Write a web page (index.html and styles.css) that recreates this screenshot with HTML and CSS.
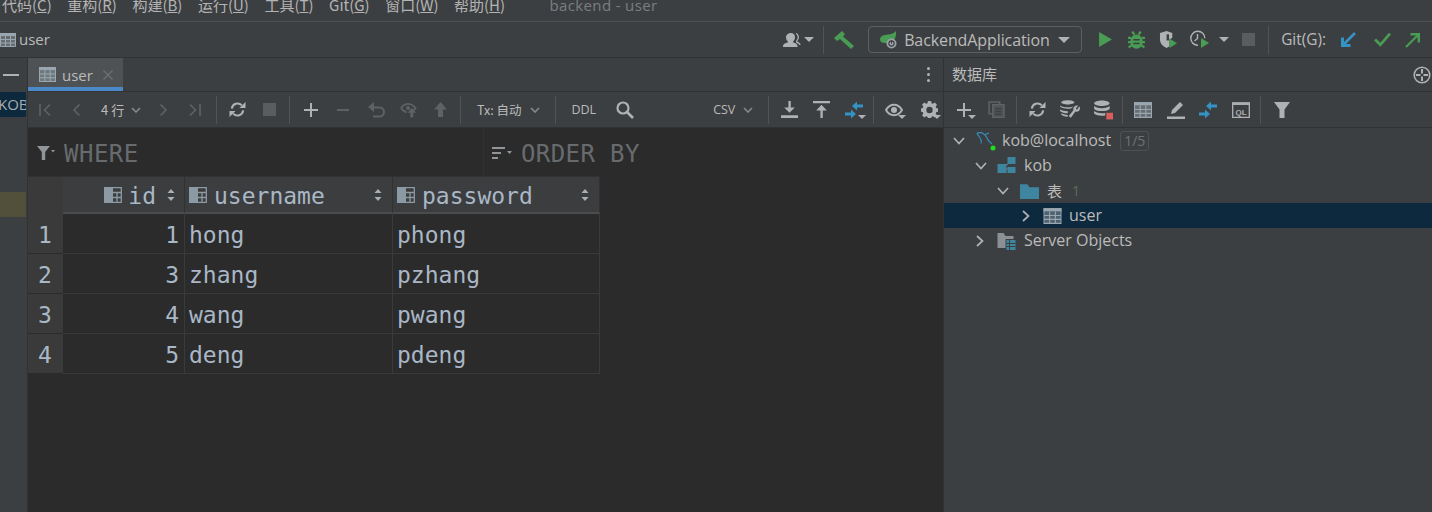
FILE: index.html
```html
<!DOCTYPE html>
<html lang="zh">
<head>
<meta charset="utf-8">
<title>backend - user</title>
<link rel="stylesheet" href="styles.css">
</head>
<body>
<svg class="defs" aria-hidden="true">
  <symbol id="tbl" viewBox="0 0 16 16">
    <path fill="#9aa7b0" d="M0 1h16v3H0z"/>
    <path fill="#9aa7b0" fill-opacity=".45" d="M1 4h14v11H1z"/>
    <path fill="none" stroke="#9aa7b0" d="M.5 1.500h15v13H.5zM.5 7.500h15M.5 11h15M5.500 4v11M10.500 4v11"/>
  </symbol>
  <symbol id="col" viewBox="0 0 18 16">
    <path fill="#8b9aa5" d="M0 0h9v16H0z"/>
    <path fill="none" stroke="#8b9aa5" stroke-width="1.300" d="M9 .7h8.300v14.600H9M9 5.500h8.300M9 10.500h8.300M13 5.500v9.800"/>
  </symbol>
  <symbol id="sort" viewBox="0 0 8 14">
    <path fill="#a9b0b5" d="M4 1l3.500 4h-7zM4 13L.5 9h7z"/>
  </symbol>
  <symbol id="compare" viewBox="0 0 18 17">
    <path fill="#3592c4" d="M7 4.500L12 0v3h6v3h-6v3zM11 12.500L6 17v-3H0v-3h6V8z"/>
  </symbol>
  <symbol id="refresh" viewBox="0 0 18 18">
    <path fill="none" stroke="#afb1b3" stroke-width="2.200" d="M3 8a6 6 0 0 1 10.500-3.300M15 10a6 6 0 0 1-10.500 3.300"/>
    <path fill="#afb1b3" d="M11 7.500h6.500V1zM7 10.500H.5V17z"/>
  </symbol>
  <symbol id="caret" viewBox="0 0 8 4"><path fill="#afb1b3" d="M0 0h8L4 4z"/></symbol>
  <symbol id="chev" viewBox="0 0 10 6"><path fill="none" stroke="#868a8c" stroke-width="1.600" d="M1 1l4 4 4-4"/></symbol>
  <symbol id="tdown" viewBox="0 0 12 8"><path fill="none" stroke="#afb1b3" stroke-width="1.700" d="M1 1l5 5.500L11 1"/></symbol>
  <symbol id="tright" viewBox="0 0 8 12"><path fill="none" stroke="#afb1b3" stroke-width="1.700" d="M1 1l5.500 5L1 11"/></symbol>
</svg>

<div class="app">
  <header class="menubar">
    <span class="mi">代码(<u>C</u>)</span>
    <span class="mi">重构(<u>R</u>)</span>
    <span class="mi">构建(<u>B</u>)</span>
    <span class="mi">运行(<u>U</u>)</span>
    <span class="mi">工具(<u>T</u>)</span>
    <span class="mi">Git(<u>G</u>)</span>
    <span class="mi">窗口(<u>W</u>)</span>
    <span class="mi">帮助(<u>H</u>)</span>
    <span class="wintitle">backend - user</span>
  </header>

  <nav class="navbar">
    <div class="crumb"><svg class="ic16"><use href="#tbl"/></svg><span>user</span></div>
    <div class="navtools">
      <svg class="person" viewBox="0 0 22 16"><path fill="#afb1b3" d="M9 1c2.500 0 4 1.800 4 4.200 0 1.800-.8 3.300-1.800 4.100v1.200c2.400.7 4.300 1.600 4.300 3.500v1H1v-1c0-1.900 2.100-2.800 4.800-3.500V9.300C4.800 8.500 4 7 4 5.200 4 2.800 6.500 1 9 1z"/><path fill="none" stroke="#afb1b3" stroke-width="1.300" d="M14 1.500c1.500.6 2.300 2 2.300 3.800 0 1.500-.7 2.800-1.500 3.600v1.400c1.800.5 3.200 1.400 3.200 2.700"/></svg>
      <svg class="caret8"><use href="#caret"/></svg>
      <i class="sep navsep"></i>
      <svg class="hammer" viewBox="0 0 20 18"><path fill="#499c54" d="M0 7L8 0l3 3-2 2.500L20 15l-3 3L6 8l-3 2z"/></svg>
      <div class="runconfig">
        <svg class="leaf" viewBox="0 0 18 18"><path fill="#499c54" d="M16 0c.5 5-1 10-5.500 12H5C2.500 12 0 11 0 8.500 0 5 4 3.800 8 3.500 11 3.200 14 2.500 16 0z"/><circle cx="11.500" cy="12.500" r="5" fill="#9aa0a4"/><circle cx="11.500" cy="12.500" r="2.600" fill="none" stroke="#3c3f41" stroke-width="1.100"/><path stroke="#3c3f41" stroke-width="1.100" d="M11.500 9.500v3"/></svg>
        <span class="rc-name">BackendApplication</span>
        <svg class="rc-caret"><use href="#caret"/></svg>
      </div>
      <svg class="run" viewBox="0 0 12 14"><path fill="#499c54" d="M0 0l12 7-12 7z"/></svg>
      <svg class="bug" viewBox="0 0 16 17"><path fill="none" stroke="#499c54" stroke-width="2.100" d="M4 .5l2 3M12 .5l-2 3M0 6.500h3M0 10.500h3M.5 15.500l3-2M16 6.500h-3M16 10.500h-3M15.500 15.500l-3-2"/><ellipse cx="8" cy="10" rx="5.800" ry="6.800" fill="#499c54"/><path fill="#3c3f41" d="M5 7.500h6V9H5zM5 11h6v1.500H5z"/></svg>
      <svg class="cover" viewBox="0 0 20 19"><path fill="#afb1b3" d="M1 2l7-2 6 2v5l-3 2v7l-3 2c-4-2-7-4.500-7-9z"/><path fill="#3c3f41" d="M8 3.500h2.500V10H8z"/><path fill="#499c54" d="M11 8l8 5-8 5z"/></svg>
      <svg class="profile" viewBox="0 0 22 19"><path fill="none" stroke="#afb1b3" stroke-width="1.400" d="M9 15.300a7 7 0 1 1 6.800-7M8.500 4v4.500L5.500 11"/><path fill="#499c54" d="M12 8l8 5-8 5z"/></svg>
      <svg class="caret8 prof-caret"><use href="#caret"/></svg>
      <i class="stop navstop"></i>
      <i class="sep navsep2"></i>
      <span class="gitlabel">Git(G):</span>
      <svg class="gitic" viewBox="0 0 16 16"><path fill="none" stroke="#3592c4" stroke-width="2.600" d="M15 1L3.500 12.500"/><path fill="#3592c4" d="M1 5.500h3v6.500h6.500V15H1z"/></svg>
      <svg class="gitic gitcheck" viewBox="0 0 16 14"><path fill="none" stroke="#499c54" stroke-width="2.600" d="M1 7l5 5L15 1.500"/></svg>
      <svg class="gitic gitpush" viewBox="0 0 16 16"><path fill="none" stroke="#499c54" stroke-width="2.200" d="M1 15L13 3"/><path fill="#499c54" d="M15 1v9.500h-2.500V3.500H5.500V1z"/></svg>
    </div>
  </nav>

  <div class="body">
    <aside class="strip">
      <div class="strip-top"><i class="minus"></i></div>
      <div class="strip-kob">KOB</div>
      <div class="strip-mark"></div>
    </aside>

    <main class="console">
      <div class="tabbar">
        <div class="tab">
          <svg class="ic17"><use href="#tbl"/></svg>
          <span>user</span>
          <svg class="tabx" viewBox="0 0 10 10"><path stroke="#6f7274" stroke-width="1.100" d="M.5.500l9 9M9.500.500l-9 9"/></svg>
        </div>
        <div class="kebab"><i></i><i></i><i></i></div>
      </div>

      <div class="toolbar">
        <span class="btn"><svg class="ic14" viewBox="0 0 14 14"><path fill="none" stroke="#5f6264" stroke-width="1.600" d="M2 1v12M12 1.500L6.500 7l5.500 5.500"/></svg></span>
        <span class="btn"><svg class="ic14" viewBox="0 0 14 14"><path fill="none" stroke="#5f6264" stroke-width="1.600" d="M9.500 1.500L4 7l5.500 5.500"/></svg></span>
        <span class="rows"><span>4 行</span><svg class="chev"><use href="#chev"/></svg></span>
        <span class="btn"><svg class="ic14" viewBox="0 0 14 14"><path fill="none" stroke="#5f6264" stroke-width="1.600" d="M4.500 1.500L10 7l-5.500 5.500"/></svg></span>
        <span class="btn"><svg class="ic14" viewBox="0 0 14 14"><path fill="none" stroke="#5f6264" stroke-width="1.600" d="M12 1v12M2 1.500L7.500 7 2 12.500"/></svg></span>
        <i class="sep s1"></i>
        <span class="btn"><svg class="ic17"><use href="#refresh"/></svg></span>
        <span class="btn"><i class="stop"></i></span>
        <i class="sep s2"></i>
        <span class="btn"><svg class="ic14" viewBox="0 0 14 14"><path fill="#afb1b3" d="M6 0h2v6h6v2H8v6H6V8H0V6h6z"/></svg></span>
        <span class="btn"><svg class="ic14" viewBox="0 0 14 14"><path fill="#5f6264" d="M1 6h12v2H1z"/></svg></span>
        <span class="btn nudge"><svg class="ic17" viewBox="0 0 17 17"><path fill="none" stroke="#5f6264" stroke-width="2" d="M4 6.500h7.500a4.500 4.500 0 0 1 0 9H5"/><path fill="#5f6264" d="M6 1v10L0 6z"/></svg></span>
        <span class="btn"><svg class="ic17" viewBox="0 0 18 17"><path fill="none" stroke="#5f6264" stroke-width="2" d="M1 7c2-3 4.500-4.500 7.500-4.500S14 4 16.500 7c-1 1.500-2 2.500-3.500 3.500M7 11.500C4.500 11 3 9.500 1 7"/><circle cx="8.500" cy="7" r="2.200" fill="#5f6264"/><path fill="#5f6264" d="M12.500 7l4.500 5h-3v5h-3v-5H8z"/></svg></span>
        <span class="btn"><svg class="ic17" viewBox="0 0 16 17"><path fill="#5f6264" d="M8 1l6.500 7.500H10.500V16h-5V8.500H1.500z"/></svg></span>
        <i class="sep s3"></i>
        <span class="drop tx"><span>Tx: 自动</span><svg class="chev"><use href="#chev"/></svg></span>
        <i class="sep s4"></i>
        <span class="ddl">DDL</span>
        <svg class="search" viewBox="0 0 18 18"><circle cx="7" cy="7" r="5.500" fill="none" stroke="#afb1b3" stroke-width="2.200"/><path stroke="#afb1b3" stroke-width="2.600" d="M11 11l6 6"/></svg>
        <span class="drop csv"><span>CSV</span><svg class="chev"><use href="#chev"/></svg></span>
        <i class="sep s5"></i>
        <span class="btn"><svg class="ic17" viewBox="0 0 16 16"><path fill="#afb1b3" d="M7 0h2.200v6H13l-5 5-5-5h4zM0 13.500h16V16H0z"/></svg></span>
        <span class="btn b33"><svg class="ic17" viewBox="0 0 16 16"><path fill="#afb1b3" d="M0 0h16v2.200H0zM8 3.500L13 9H9.200v7H7V9H3z"/></svg></span>
        <span class="btn withcaret"><svg class="ic18"><use href="#compare"/></svg><svg class="mini"><use href="#caret"/></svg></span>
        <i class="sep s6"></i>
        <span class="btn withcaret"><svg class="ic18" viewBox="0 0 18 13"><path fill="none" stroke="#afb1b3" stroke-width="2" d="M1 6.500C3 3 6 1.300 9 1.300s6 1.700 8 5.200c-2 3.500-5 5.200-8 5.200S3 10 1 6.500z"/><circle cx="9" cy="6.500" r="3" fill="#afb1b3"/></svg><svg class="mini"><use href="#caret"/></svg></span>
        <span class="btn withcaret gear"><svg class="ic17" viewBox="0 0 16 16"><path fill="#afb1b3" fill-rule="evenodd" d="M6.500 0h3l.4 2.100 1.300.6L13 1.500l2 2.100-1.200 1.800.6 1.300 1.600.3v3l-1.600.4-.6 1.300 1.200 1.800-2 2-1.800-1.200-1.300.6-.4 1.600h-3l-.4-1.600-1.300-.6L3 15.500l-2-2 1.200-1.800-.6-1.300L0 10V7l1.600-.3.600-1.300L1 3.600l2-2.100 1.800 1.200 1.300-.6zM8 5.500a3 3 0 1 0 0 6 3 3 0 0 0 0-6z"/></svg><svg class="mini"><use href="#caret"/></svg></span>
      </div>

      <div class="filters">
        <div class="filter where">
          <svg class="filter-ic" viewBox="0 0 18 14"><path fill="#8f9598" d="M0 0h13L8.200 6v8H4.800V6z"/><path fill="#8f9598" d="M14 4h4l-2 2.500z"/></svg>
          <span>WHERE</span>
        </div>
        <div class="filter order">
          <svg class="filter-ic" viewBox="0 0 20 14"><path fill="#8f9598" d="M0 1h13v2H0zM0 6h9v2H0zM0 11h6v2H0zM15 5h5l-2.500 3z"/></svg>
          <span>ORDER BY</span>
        </div>
      </div>

      <div class="grid">
        <div class="hd corner"></div>
        <div class="hd hd-id"><svg class="colic"><use href="#col"/></svg><span class="idname">id</span><svg class="sorti"><use href="#sort"/></svg></div>
        <div class="hd"><svg class="colic"><use href="#col"/></svg><span class="grow">username</span><svg class="sorti"><use href="#sort"/></svg></div>
        <div class="hd"><svg class="colic"><use href="#col"/></svg><span class="grow">password</span><svg class="sorti"><use href="#sort"/></svg></div>

        <div class="rn">1</div><div class="c num">1</div><div class="c">hong</div><div class="c">phong</div>
        <div class="rn">2</div><div class="c num">3</div><div class="c">zhang</div><div class="c">pzhang</div>
        <div class="rn">3</div><div class="c num">4</div><div class="c">wang</div><div class="c">pwang</div>
        <div class="rn">4</div><div class="c num">5</div><div class="c">deng</div><div class="c">pdeng</div>
      </div>
    </main>

    <section class="dbpanel">
      <div class="dbhead">
        <span>数据库</span>
        <svg class="target" viewBox="0 0 18 18"><circle cx="9" cy="9" r="7.800" fill="none" stroke="#afb1b3" stroke-width="1.600"/><path stroke="#afb1b3" stroke-width="2" d="M9 3v4.500M9 10.500V15M3 9h4.500M10.500 9H15"/></svg>
      </div>
      <div class="dbtools">
        <span class="btn withcaret"><svg class="ic14" viewBox="0 0 14 14"><path fill="#afb1b3" d="M6 0h2v6h6v2H8v6H6V8H0V6h6z"/></svg><svg class="mini"><use href="#caret"/></svg></span>
        <span class="btn"><svg class="ic17" viewBox="0 0 16 16"><path fill="none" stroke="#5f6264" stroke-width="1.500" d="M11 3V1H1v11h3"/><path fill="#5f6264" fill-opacity=".55" stroke="#5f6264" stroke-width="1.500" d="M4.500 3.500H15v12H4.500z"/><path stroke="#3c3f41" stroke-width="1.200" d="M7 7.500h5.500M7 10h5.500M7 12.500h5.500"/></svg></span>
        <i class="sep d1"></i>
        <span class="btn"><svg class="ic17"><use href="#refresh"/></svg></span>
        <span class="btn b33"><svg class="ic22" viewBox="0 0 20 17"><path fill="#afb1b3" d="M2 2c0-1.200 3-2 6-2s6 .8 6 2-3 2-6 2-6-.8-6-2zM1 6v-1c2 1 4.500 1.500 7 1.500 2 0 3.500-.3 5-.8L11 7.500c-3 .6-7 .4-10-1.500zM1 10V8.500c2 1 4 1.400 7 1.500v2c-3 0-5.500-1-7-2zM2 13v-1c1.500.8 3 1.200 6 1.500V15c-3 0-5-1-6-2z"/><path fill="#afb1b3" d="M18.500 5.500c1 1.500.7 3.300-.5 4.300-.9.800-2.100.9-3.100.5L10.800 16l-2-1.500 4.300-5.400c-.4-1.100-.1-2.300.7-3.200 1-1 2.400-1.300 3.600-.7l-2.100 2.400 1 1.100z"/></svg></span>
        <span class="btn b33"><svg class="ic20" viewBox="0 0 18 18"><path fill="#afb1b3" d="M1 3c0-1.500 3.500-2.500 7-2.500S15 1.500 15 3s-3.500 2.500-7 2.500S1 4.500 1 3zM1 5.500C3 7 5.500 7.500 8 7.500s5-.5 7-2V8c-1.500 1.300-4 2-7 2S2.500 9.300 1 8zM1 10c2 1.500 4.500 2 7 2 1 0 2 0 3-.3V14c-1 .2-2 .2-3 .2-3 0-5.500-.7-7-2z"/><path fill="#db5c5c" d="M12 11.500h6v6h-6z"/></svg></span>
        <i class="sep d2"></i>
        <span class="btn"><svg class="ic18"><use href="#tbl"/></svg></span>
        <span class="btn b33"><svg class="ic18" viewBox="0 0 18 18"><path fill="#afb1b3" d="M13 1l3 3-8 8-4 1 1-4zM0 15.500h18V18H0z"/></svg></span>
        <span class="btn"><svg class="ic18"><use href="#compare"/></svg></span>
        <span class="btn b33"><svg class="ic18" viewBox="0 0 18 16"><path fill="#afb1b3" fill-opacity=".85" d="M0 0h18v3H0z"/><path fill="none" stroke="#afb1b3" stroke-width="1.300" d="M.7 2h16.600v13.300H.7z"/><text class="qltxt" x="9" y="12.500" text-anchor="middle">QL</text></svg></span>
        <i class="sep d3"></i>
        <span class="btn"><svg class="ic16" viewBox="0 0 16 16"><path fill="#afb1b3" d="M0 0h16l-5.500 7.500V16h-5V7.500z"/></svg></span>
      </div>
      <div class="tree">
        <div class="node lv0">
          <svg class="tw"><use href="#tdown"/></svg>
          <svg class="nic dolphin" viewBox="0 0 20 20"><g fill="none" stroke="#3592c4" stroke-width="1.100"><path d="M1 2c4-1 8 1 10 5 1 3 3 4 5 6"/><path d="M1 2c1 3 3 4 4 7 .3 1 .3 2.500 0 3.500"/><path d="M9 3.500l4-1.500"/></g><circle cx="17" cy="17" r="2.500" fill="#1ddd1d"/></svg>
          <span class="lbl">kob@localhost</span>
          <span class="badge">1/5</span>
        </div>
        <div class="node lv1">
          <svg class="tw"><use href="#tdown"/></svg>
          <svg class="nic" viewBox="0 0 18 18"><path fill="#3e86a0" d="M0 7h9v9H0z"/><path fill="#3e86a0" d="M10 0h8v7h-8zM10 10h8v6h-8z"/><path fill="none" stroke="#9aa7b0" d="M9 8l1-1M9 12h1"/></svg>
          <span class="lbl">kob</span>
        </div>
        <div class="node lv2">
          <svg class="tw"><use href="#tdown"/></svg>
          <svg class="nic" viewBox="0 0 18 15"><path fill="#3e86a0" d="M0 1h7l2 3h9v11H0z"/></svg>
          <span class="lbl cjk">表</span>
          <span class="count">1</span>
        </div>
        <div class="node lv3 selected">
          <svg class="tw tw-r"><use href="#tright"/></svg>
          <svg class="nic"><use href="#tbl"/></svg>
          <span class="lbl">user</span>
        </div>
        <div class="node lv1 srv">
          <svg class="tw tw-r"><use href="#tright"/></svg>
          <svg class="nic" viewBox="0 0 18 18"><path fill="#8a9096" d="M0 1h6l2 3h8v3H8v9H0z"/><path fill="#3e86a0" d="M9 8h9v10H9z"/><path stroke="#3c3f41" d="M9 11.500h9M9 14.500h9M12 8v10"/></svg>
          <span class="lbl">Server Objects</span>
        </div>
      </div>
    </section>
  </div>
</div>
</body>
</html>
```

FILE: styles.css
```css
* { box-sizing: border-box; }
html, body { margin: 0; padding: 0; height: 100%; overflow: hidden; }
body { background: #3c3f41; color: #bbbbbb; font: 16px "Open Sans", "Noto Sans CJK SC", sans-serif; }
.defs { display: none; }
svg { display: block; flex: none; overflow: hidden; }
i { display: block; flex: none; }

.app { width: 1432px; height: 512px; display: flex; flex-direction: column; }

/* menu */
.menubar { height: 22px; flex: none; display: flex; padding-left: 2px; gap: 15.500px; overflow: hidden; border-bottom: 1px solid #515151; font: 15px/10px "Noto Sans CJK SC", sans-serif; white-space: nowrap; color: #b4b4b4; }
.wintitle { margin-left: 29px; color: #7b7e80; font-family: "Open Sans", sans-serif; letter-spacing: .35px; }

/* nav */
.navbar { height: 36px; flex: none; display: flex; align-items: center; border-bottom: 1px solid #323232; }
.crumb { display: flex; align-items: center; gap: 3px; font-size: 15px; }
.crumb span { padding-bottom: 1px; }
.ic16 { width: 16px; height: 16px; }
.navtools { margin-left: auto; display: flex; align-items: center; height: 100%; }
.person { width: 22px; height: 16px; }
.caret8 { width: 10px; height: 5px; }
.sep { width: 1px; height: 28px; background: #515455; }
.navsep { margin: 0 10px 0 9px; }
.hammer { width: 20px; height: 18px; margin-right: 14px; }
.runconfig { width: 214px; height: 27px; border: 1px solid #5e6060; border-radius: 4px; display: flex; align-items: center; padding-left: 11px; }
.leaf { width: 18px; height: 18px; margin-right: 6px; }
.rc-name { font-size: 16px; letter-spacing: -.1px; }
.rc-caret { width: 12px; height: 6px; margin-left: auto; margin-right: 11px; }
.run { width: 13px; height: 15px; margin-left: 17px; }
.bug { width: 17px; height: 18px; margin-left: 16px; }
.cover { width: 19px; height: 18px; margin-left: 14px; }
.profile { width: 22px; height: 19px; margin-left: 11px; }
.prof-caret { margin-left: 8px; }
.stop { width: 13px; height: 13px; background: #5a5c5d; }
.navstop { margin-left: 13px; }
.navsep2 { margin-left: 13px; }
.gitlabel { margin-left: 12px; font-size: 15.400px; padding-bottom: 1px; }
.gitic { width: 16px; height: 16px; margin-left: 14px; }
.gitcheck { width: 17px; height: 15px; margin-left: 18px; }
.gitpush { margin-left: 14px; margin-right: 11px; }

/* body */
.body { flex: 1; min-height: 0; display: flex; }
.strip { width: 28px; flex: none; display: flex; flex-direction: column; background: #3c3f41; border-right: 1px solid #323232; overflow: hidden; }
.strip-top { height: 34px; flex: none; display: flex; align-items: center; justify-content: center; }
.minus { width: 16px; height: 2px; background: #afb1b3; margin-right: 6px; }
.strip-kob { height: 25px; flex: none; background: #0d293e; font-size: 15px; line-height: 24px; text-indent: -2px; margin-right: 1px; white-space: nowrap; overflow: hidden; color: #a7adb2; }
.strip-mark { height: 25px; flex: none; margin-top: 75px; background: #52503a; margin-right: 1px; }

.console { width: 916px; flex: none; display: flex; flex-direction: column; background: #2b2b2b; border-right: 1px solid #323232; }
.tabbar { height: 34px; flex: none; display: flex; background: #3c3f41; border-bottom: 1px solid #323232; }
.tab { width: 95px; height: 33px; display: flex; align-items: center; padding: 4px 0 0 11px; gap: 6px; background: #4e5254; border-bottom: 4px solid #4a88c7; font-size: 15px; }
.ic17 { width: 17px; height: 17px; }
.ic14 { width: 14px; height: 14px; }
.ic18 { width: 18px; height: 18px; }
.ic20 { width: 20px; height: 20px; }
.ic22 { width: 22px; height: 19px; }
.tabx { width: 10px; height: 10px; margin-left: 4px; }
.kebab { margin-left: auto; width: 30px; display: flex; flex-direction: column; align-items: center; justify-content: center; gap: 3px; }
.kebab i { width: 3px; height: 3px; border-radius: 50%; background: #afb1b3; }

.toolbar { height: 36px; flex: none; display: flex; align-items: center; padding-left: 1px; background: #3c3f41; border-bottom: 1px solid #323232; font-size: 12.500px; white-space: nowrap; }
.btn { width: 32px; height: 100%; flex: none; display: flex; align-items: center; justify-content: center; position: relative; }
.b33 { width: 33px; }
.nudge { margin-left: 1px; }
.mini { position: absolute; width: 8px; height: 4px; right: 4px; top: 23px; }
.gear { margin-left: 3px; }
.rows { width: 54px; flex: none; display: flex; align-items: center; gap: 7px; padding-left: 8px; font: 13px "Noto Sans CJK SC", sans-serif; }
.chev { width: 10px; height: 6px; }
.s1 { margin: 0 4px 0 5px; }
.s2 { margin: 0 5px 0 4px; }
.s3 { margin: 0 16px 0 4px; }
.s4 { margin: 0 15px 0 15px; }
.s5 { margin: 0 4px 0 15px; }
.s6 { margin: 0 4px 0 3px; }
.tx { display: flex; align-items: center; gap: 9px; font: 12.500px "Noto Sans CJK SC", sans-serif; }
.search { width: 18px; height: 18px; margin-left: 20px; }
.csv { margin-left: 79px; display: flex; align-items: center; gap: 8px; }

.filters { height: 49px; flex: none; display: flex; }
.filter { display: flex; align-items: center; padding-top: 2px; color: #686b6e; font: 24px "DejaVu Sans Mono", monospace; }
.where { width: 456px; padding-left: 9px; gap: 9px; border-right: 1px solid #323232; letter-spacing: .5px; }
.order { padding-left: 8px; gap: 9px; letter-spacing: .4px; }
.filter-ic { width: 18px; height: 14px; margin-top: -2px; }
.order .filter-ic { width: 20px; }

.grid { display: grid; grid-template-columns: 35px 122px 208px 207px; grid-template-rows: 37px; grid-auto-rows: 40px; width: max-content; font: 23px "DejaVu Sans Mono", monospace; color: #a9b7c6; border-top: 1px solid #323232; margin-top: -1px; }
.hd { background: #3c3d3e; border-right: 1px solid #323232; border-bottom: 2px solid #4a4d4e; display: flex; align-items: center; padding: 2px 10px 0 4px; gap: 7px; }
.corner { background: #3a3a3a; border-right: none; border-bottom-color: #3a3a3a; }
.hd-id { justify-content: flex-end; padding-right: 9px; gap: 6px; }
.idname { margin-right: 5px; }
.grow { flex: 1; }
.colic { width: 18px; height: 16px; margin-top: -2px; }
.sorti { width: 8px; height: 14px; margin-top: -2px; }
.rn { background: #3a3a3a; border-bottom: 1px solid #2b2b2b; display: flex; align-items: center; padding: 2px 0 0 10px; }
.c { display: flex; align-items: center; padding: 2px 5px 0 4px; border-right: 1px solid #3a3a3a; border-bottom: 1px solid #3a3a3a; }
.num { justify-content: flex-end; }

/* database */
.dbpanel { flex: 1; min-width: 0; display: flex; flex-direction: column; }
.dbhead { height: 34px; flex: none; display: flex; align-items: center; justify-content: space-between; padding: 0 1px 2px 8px; border-bottom: 1px solid #323232; font: 15px "Noto Sans CJK SC", sans-serif; }
.target { width: 18px; height: 18px; margin-top: 2px; }
.dbtools { height: 36px; flex: none; display: flex; align-items: center; padding-left: 4px; border-bottom: 1px solid #323232; }
.d1 { margin: 0 4px 0 4px; }
.d2 { margin: 0 4px 0 3px; }
.d3 { margin: 0 5px 0 3px; }
.qltxt { font: bold 8px "Liberation Sans", sans-serif; fill: #afb1b3; }

.tree { display: flex; flex-direction: column; font-size: 16px; }
.node { height: 25px; display: flex; align-items: center; white-space: nowrap; }
.lbl { padding-bottom: 2px; }
.lv0 { padding-left: 9px; }
.lv1 { padding-left: 31px; }
.lv2 { padding-left: 53px; }
.lv3 { padding-left: 78px; }
.srv { padding-left: 32px; }
.selected { background: #0d293e; }
.tw { width: 12px; height: 8px; margin-right: 10px; }
.tw-r { width: 8px; height: 12px; margin-right: 13px; }
.lv0 .tw { margin-right: 11px; }
.lv2 .tw { margin-right: 11px; }
.nic { width: 19px; height: 18px; margin-right: 8px; }
.lv3 .nic { margin-right: 7px; }
.dolphin { width: 20px; height: 20px; margin-right: 6px; }
.badge { margin-left: 9px; padding: 0 3px; border: 1px solid #4e5254; border-radius: 3px; font-size: 14px; color: #6f7274; line-height: 18px; }
.lbl.cjk { font-family: "Noto Sans CJK SC", sans-serif; font-size: 15px; padding-bottom: 0; }
.count { margin-left: 10px; font-size: 14px; color: #5f6e5a; }
```
